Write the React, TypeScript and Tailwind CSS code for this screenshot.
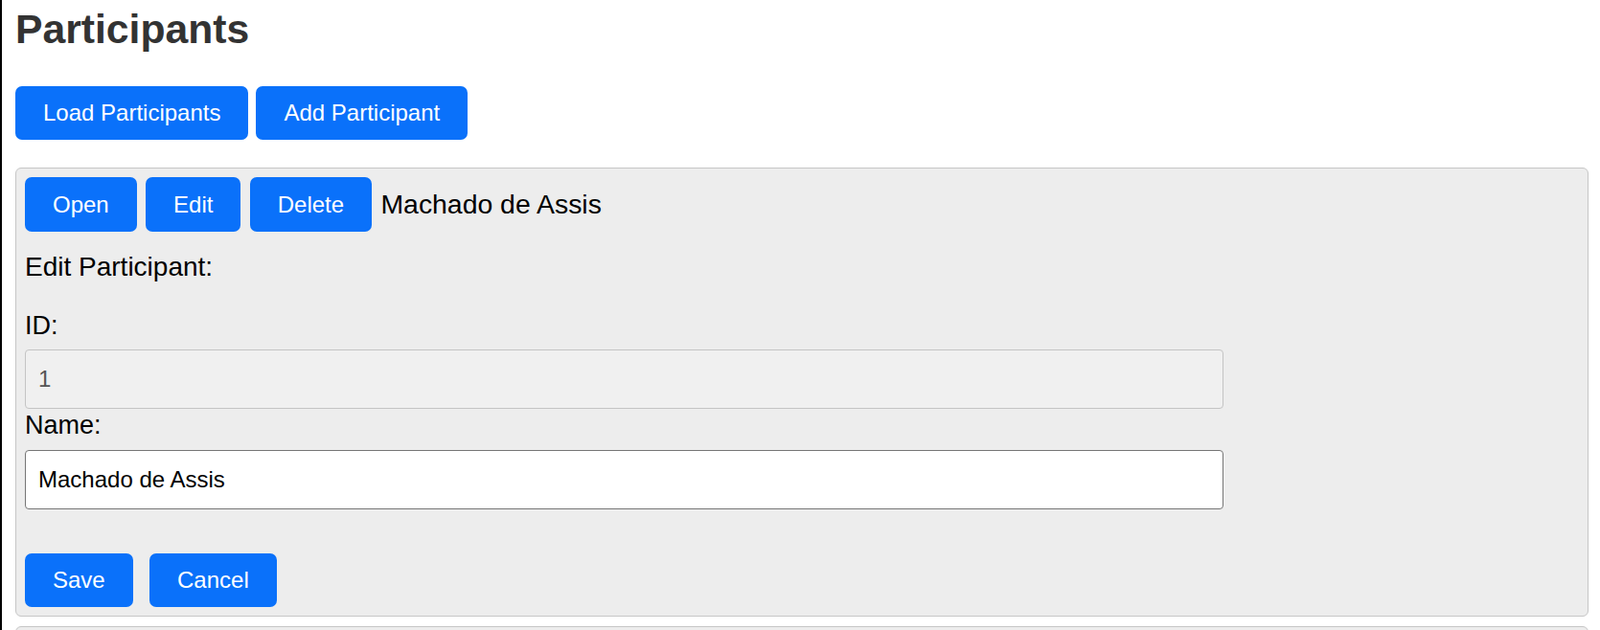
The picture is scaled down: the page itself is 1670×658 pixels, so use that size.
import type { ReactNode } from 'react'

function BlueButton({ children, tall }: { children: ReactNode; tall?: boolean }) {
  return (
    <button
      type="button"
      className={
        'flex shrink-0 items-center justify-center rounded-[7px] bg-[#0a71fa] px-[29px] text-[24px] leading-[normal] text-white ' +
        (tall ? 'h-[57px]' : 'h-[56px]')
      }
    >
      {children}
    </button>
  )
}

export default function App() {
  return (
    <div className="min-h-screen border-l-2 border-black bg-white pl-[14px] pr-[12px] font-['Liberation_Sans',Arial,sans-serif] text-black">
      <h1 className="pt-[6px] text-[42.67px] font-bold leading-[normal] text-[#333333]">Participants</h1>

      <div className="mt-[35px] flex gap-[8px]">
        <BlueButton>Load Participants</BlueButton>
        <BlueButton>Add Participant</BlueButton>
      </div>

      {/* participant card, in edit mode */}
      <div className="mt-[29px] rounded-[6px] border border-[#c6c6c6] bg-[#ededed] p-[9px]">
        <div className="flex items-center gap-[9.33px]">
          <BlueButton tall>Open</BlueButton>
          <BlueButton tall>Edit</BlueButton>
          <BlueButton tall>Delete</BlueButton>
          <span className="text-[28.4px] leading-[normal]">Machado de Assis</span>
        </div>

        <p className="mt-[20.5px] text-[28px] leading-[normal]">Edit Participant:</p>

        <label className="mt-[30px] block text-[27px] leading-[normal]">ID:</label>
        <input
          readOnly
          value="1"
          className="mt-[9.5px] block h-[62px] w-[1251px] rounded-[4px] border border-[#c4c4c4] bg-[#f0f0f0] pl-[13px] font-['Liberation_Sans',Arial,sans-serif] text-[24px] text-[#555555] outline-none"
        />

        <label className="mt-[2px] block text-[27px] leading-[normal]">Name:</label>
        <input
          defaultValue="Machado de Assis"
          className="mt-[9.5px] block h-[62px] w-[1251px] rounded-[4px] border border-[#767676] bg-white pl-[13px] font-['Liberation_Sans',Arial,sans-serif] text-[24px] text-black outline-none"
        />

        <div className="mt-[46px] flex gap-[17.33px]">
          <BlueButton>Save</BlueButton>
          <BlueButton>Cancel</BlueButton>
        </div>
      </div>

      {/* next card, cut off by the window */}
      <div className="mt-[10px] h-[60px] rounded-[6px] border border-[#c6c6c6] bg-[#ededed]" />
    </div>
  )
}
